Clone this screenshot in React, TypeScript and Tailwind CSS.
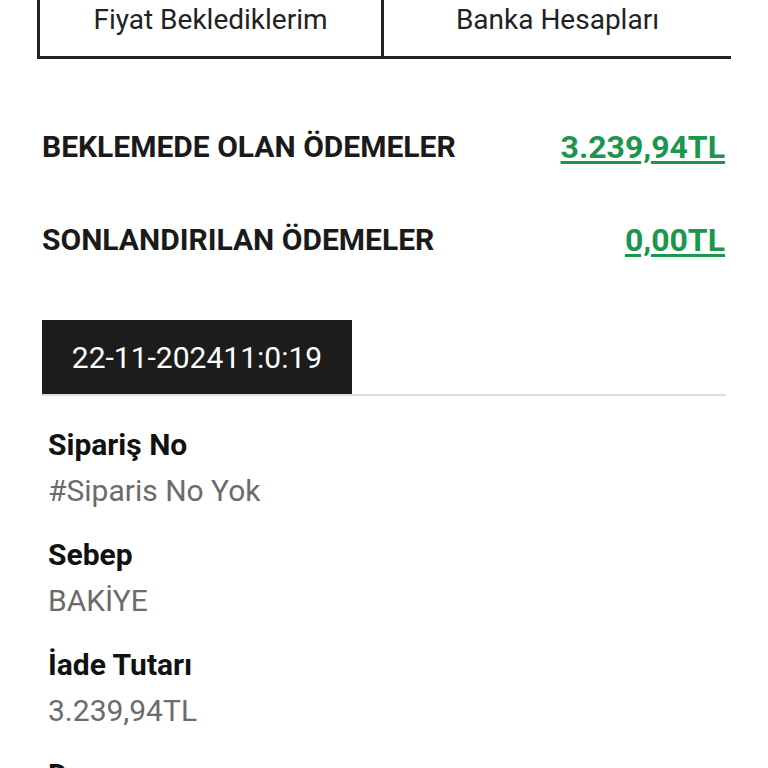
import React from "react";

const details = [
  { label: "Sipariş No", value: "#Siparis No Yok" },
  { label: "Sebep", value: "BAKİYE" },
  { label: "İade Tutarı", value: "3.239,94TL" },
  { label: "Durum", value: "Beklemede" },
];

export default function App() {
  return (
    <div className="min-h-screen bg-white font-['Roboto',sans-serif] text-[#1a1a1a]">
      {/* Tabs */}
      <div className="ml-[37px] w-[694px] flex h-[59px] border-l-[3px] border-b-[3px] border-[#222]">
        <div className="w-[344px] border-r-[3px] border-[#222] flex justify-center pt-[3px]">
          <span className="text-[28px] leading-[34px] text-[#222]">Fiyat Beklediklerim</span>
        </div>
        <div className="flex-1 flex justify-center pt-[3px]">
          <span className="text-[28px] leading-[34px] text-[#222]">Banka Hesapları</span>
        </div>
      </div>

      {/* Totals */}
      <div className="pl-[42px] pr-[43px] pt-[70px]">
        <div className="flex items-center justify-between">
          <span className="text-[30px] font-bold leading-[36px]">BEKLEMEDE OLAN ÖDEMELER</span>
          <a href="#" className="text-[32px] font-bold leading-[36px] text-[#1c954f] underline underline-offset-[3px]">
            3.239,94TL
          </a>
        </div>
        <div className="flex items-center justify-between mt-[57px]">
          <span className="text-[30px] font-bold leading-[36px]">SONLANDIRILAN ÖDEMELER</span>
          <a href="#" className="text-[32px] font-bold leading-[36px] text-[#1c954f] underline underline-offset-[3px]">
            0,00TL
          </a>
        </div>
      </div>

      {/* Payment card */}
      <div className="mx-[42px] mt-[62px] w-[684px]">
        <div className="flex border-b-2 border-[#dedede]">
          <div className="w-[310px] h-[74px] bg-[#1c1c1c] flex items-center justify-center">
            <span className="text-[30px] text-white">22-11-202411:0:19</span>
          </div>
        </div>
        <div className="pl-[6px] pt-[31px] flex flex-col gap-[28px]">
          {details.map((d) => (
            <div key={d.label} className="flex flex-col gap-[10px]">
              <span className="text-[30px] font-bold leading-[36px] text-[#111]">{d.label}</span>
              <span className="text-[30px] leading-[36px] text-[#6b6b6b]">{d.value}</span>
            </div>
          ))}
        </div>
      </div>
    </div>
  );
}
